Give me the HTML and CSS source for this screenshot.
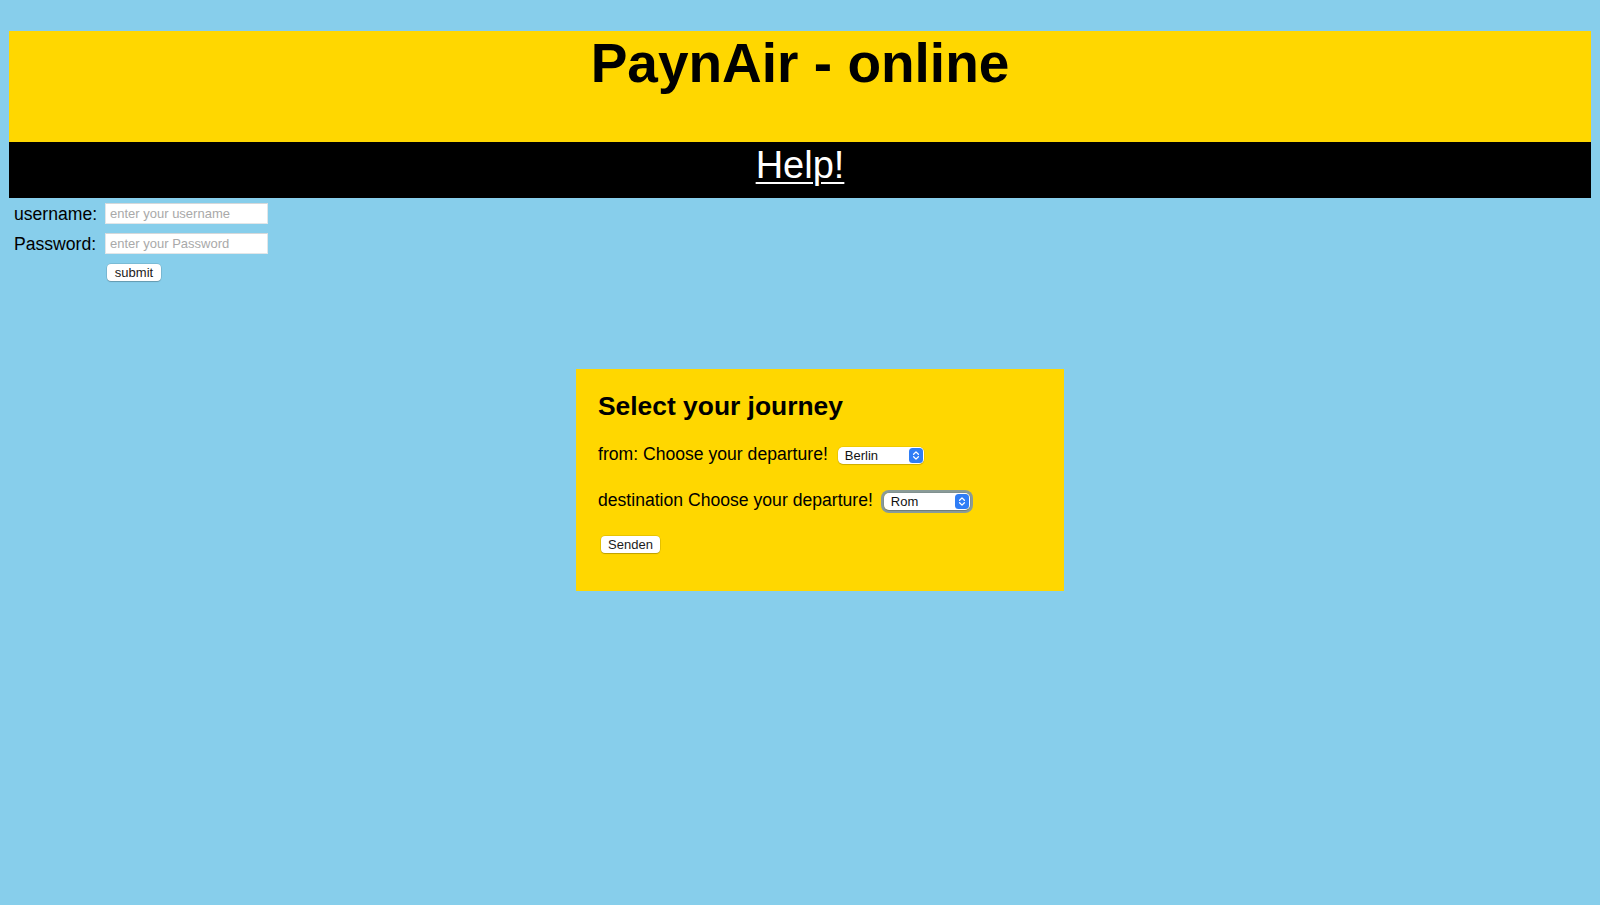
FILE: index.html
```html
<!DOCTYPE html>
<html lang="de">
<head>
<meta charset="utf-8">
<title>PaynAir - online</title>
<link rel="stylesheet" href="styles.css">
</head>
<body>
<header class="banner">
  <h1 class="title">PaynAir - online</h1>
</header>
<nav class="navbar">
  <a class="help-link" href="#">Help!</a>
</nav>
<form class="login">
  <label class="login-label" for="user">username:</label>
  <input class="login-input" id="user" type="text" placeholder="enter your username">
  <label class="login-label" for="pass">Password:</label>
  <input class="login-input" id="pass" type="password" placeholder="enter your Password">
  <span class="login-spacer"></span>
  <div class="login-actions"><button class="btn" type="button">submit</button></div>
</form>
<section class="journey">
  <h2 class="journey-title">Select your journey</h2>
  <div class="journey-row">from: Choose your departure!<span class="select-wrap"><select class="select"><option>Berlin</option><option>Rom</option></select><svg class="select-icon" width="14" height="15" viewBox="0 0 14 15"><rect x="0" y="0" width="14" height="15" rx="3.5" fill="#2f7df6"/><path d="M4.6 6.2 L7 3.9 L9.4 6.2 M4.6 8.8 L7 11.1 L9.4 8.8" fill="none" stroke="#fff" stroke-width="1.3" stroke-linecap="round" stroke-linejoin="round"/></svg></span></div>
  <div class="journey-row">destination Choose your departure!<span class="select-wrap select-wrap-focus"><select class="select"><option>Rom</option><option>Berlin</option></select><svg class="select-icon" width="14" height="15" viewBox="0 0 14 15"><rect x="0" y="0" width="14" height="15" rx="3.5" fill="#2f7df6"/><path d="M4.6 6.2 L7 3.9 L9.4 6.2 M4.6 8.8 L7 11.1 L9.4 8.8" fill="none" stroke="#fff" stroke-width="1.3" stroke-linecap="round" stroke-linejoin="round"/></svg></span></div>
  <button class="btn btn-send" type="button">Senden</button>
</section>
</body>
</html>
```
FILE: styles.css
```css
html, body {
  margin: 0;
  padding: 0;
}

body {
  background: #87ceeb;
  padding: 31px 9px 0;
  font-family: "Liberation Sans", Arial, Helvetica, sans-serif;
  font-size: 17.6px;
  color: #000;
  min-height: 905px;
  box-sizing: border-box;
}

.banner {
  background: #ffd700;
  height: 111px;
  padding-top: 5px;
  box-sizing: border-box;
}

.title {
  margin: 0;
  text-align: center;
  font-size: 55px;
  line-height: 55px;
  font-weight: bold;
}

.navbar {
  background: #000;
  height: 56px;
  text-align: center;
}

.help-link {
  color: #fff;
  font-size: 38px;
  line-height: 46px;
  text-decoration: underline;
  text-decoration-thickness: 2px;
  text-underline-offset: 4px;
}

.login {
  display: grid;
  grid-template-columns: 83px 163px;
  grid-template-rows: 21px 21px 18px;
  column-gap: 8px;
  row-gap: 9px;
  margin: 5px 0 0 5px;
}

.login-label {
  line-height: 23px;
  white-space: nowrap;
}

.login-input {
  box-sizing: border-box;
  width: 163px;
  height: 21px;
  margin: 0;
  padding: 0 4px;
  border: 1px solid #e2e6e8;
  border-top-color: #d4d8da;
  background: #fff;
  font-family: "Liberation Sans", Arial, sans-serif;
  font-size: 13px;
  outline: none;
}

.login-input::placeholder {
  color: #a9a9a9;
}

.login-actions {
  display: flex;
  align-items: flex-start;
  padding: 1px 0 0 2px;
}

.btn {
  box-sizing: border-box;
  height: 17px;
  margin: 0;
  padding: 0 7px;
  border: none;
  border-radius: 4px;
  background: #fff;
  box-shadow: 0 0 0 0.5px rgba(0, 0, 0, 0.18), 0 1px 1px rgba(0, 0, 0, 0.18);
  font-family: "Liberation Sans", Arial, sans-serif;
  font-size: 13px;
  line-height: 17px;
  color: #1a1a1a;
}

.login .btn {
  width: 54px;
}

.journey {
  display: flex;
  flex-direction: column;
  align-items: flex-start;
  width: 488px;
  box-sizing: border-box;
  margin: 88px 0 0 567px;
  padding: 22px 22px 38px;
  background: #ffd700;
}

.journey-title {
  margin: 0;
  font-size: 26.4px;
  line-height: 30px;
  font-weight: bold;
}

.journey-row {
  margin-top: 21px;
  line-height: 24px;
  white-space: nowrap;
}

.journey-row + .journey-row {
  margin-top: 22px;
}

.select-wrap {
  position: relative;
  display: inline-flex;
  vertical-align: baseline;
  margin-left: 10px;
  border-radius: 5px;
}

.select-wrap-focus {
  box-shadow: 0 0 0 3px #8a9b98;
  margin-left: 11px;
}

.select {
  -webkit-appearance: none;
  appearance: none;
  box-sizing: border-box;
  width: 86px;
  height: 17px;
  margin: 0;
  padding: 0 0 0 7px;
  border: none;
  border-radius: 5px;
  background: #fff;
  box-shadow: 0 0 0 0.5px rgba(0, 0, 0, 0.12), 0 1px 1px rgba(0, 0, 0, 0.15);
  font-family: "Liberation Sans", Arial, sans-serif;
  font-size: 13px;
  line-height: 17px;
  color: #111;
  outline: none;
}

.select-icon {
  position: absolute;
  right: 1px;
  top: 1px;
  width: 14px;
  height: 15px;
  pointer-events: none;
}

.btn-send {
  width: 59px;
  margin: 24px 0 0 3px;
}
```
